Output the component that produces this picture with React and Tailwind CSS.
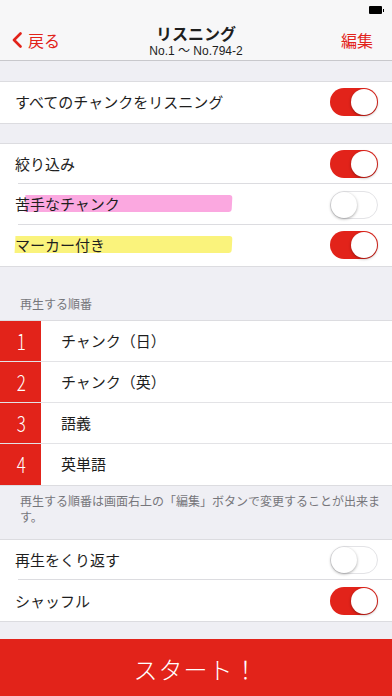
import React from 'react';

const RED = 'bg-[#e2231a]';

function Toggle({ on }) {
  return on ? (
    <div className="w-[48px] h-[28px] rounded-full bg-[#e2231a] relative shrink-0">
      <div className="absolute right-[1px] top-[1px] w-[26px] h-[26px] rounded-full bg-white shadow-[0_1px_3px_rgba(0,0,0,0.35)]" />
    </div>
  ) : (
    <div className="w-[48px] h-[28px] rounded-full bg-white border border-[#e3e3e6] relative shrink-0">
      <div className="absolute left-0 top-0 w-[26px] h-[26px] rounded-full bg-white shadow-[0_1px_3px_rgba(0,0,0,0.35)]" />
    </div>
  );
}

function Row({ label, on, divider, mark }) {
  return (
    <div className="relative h-[40.7px] flex items-center justify-between pl-[15px] pr-[14px]">
      <span className="relative">
        {mark && <span className={`absolute top-[2px] h-[17px] rounded-r-[3px] -skew-x-3 ${mark}`} />}
        <span className="relative">{label}</span>
      </span>
      <Toggle on={on} />
      {divider && <div className="absolute left-[18px] right-0 bottom-0 h-px bg-[#dcdce0]" />}
    </div>
  );
}

const order = ['チャンク（日）', 'チャンク（英）', '語義', '英単語'];

export default function App() {
  return (
    <div
      className="w-[392px] h-[696px] overflow-hidden bg-[#efeff4] text-[15px] text-[#1e1e1e]"
      style={{ fontFamily: '"Noto Sans CJK JP", "Noto Sans", sans-serif' }}
    >
      {/* status + nav */}
      <div className="bg-[#f7f7f8] border-b border-[#c8c8cc]">
        <div className="h-[20px] flex justify-end items-center pr-[8px]">
          <div className="flex items-center">
            <div className="w-[13px] h-[8px] bg-black rounded-[1px]" />
            <div className="w-[1.5px] h-[3px] bg-black ml-[1px]" />
          </div>
        </div>
        <div className="h-[40px] flex items-center justify-between pl-[11px] pr-[19px] relative">
          <div className="flex items-center text-[#e2231a] text-[16px]">
            <svg width="12" height="16" viewBox="0 0 12 16" className="mr-[5px]">
              <path d="M9.5 1.5 L3 8 L9.5 14.5" fill="none" stroke="#e2231a" strokeWidth="2.6" strokeLinecap="round" strokeLinejoin="round" />
            </svg>
            <span>戻る</span>
          </div>
          <div className="absolute left-0 right-0 top-[4px] flex flex-col items-center leading-none pointer-events-none">
            <span className="text-[16px] font-bold leading-[18px]">リスニング</span>
            <span className="text-[12px] leading-[14px] mt-[2px]" style={{ fontFamily: '"Liberation Sans", "Noto Sans CJK JP", sans-serif' }}>
              No.1 〜 No.794-2
            </span>
          </div>
          <span className="text-[#e2231a] text-[16px]">編集</span>
        </div>
      </div>

      <div className="h-[20px]" />
      <div className="bg-white border-y border-[#dcdce0]">
        <Row label="すべてのチャンクをリスニング" on />
      </div>

      <div className="h-[19px]" />
      <div className="bg-white border-y border-[#dcdce0]">
        <Row label="絞り込み" on divider />
        <Row label="苦手なチャンク" divider mark="left-[10px] w-[207px] bg-[#fba8e0]" />
        <Row label="マーカー付き" on mark="left-0 w-[217px] bg-[#faf37c]" />
      </div>

      <div className="h-[53px] flex items-end pl-[20px] pb-[7px] text-[12px] text-[#76767b]">
        再生する順番
      </div>
      <div className="bg-white border-y border-[#dcdce0]">
        {order.map((t, i) => (
          <div key={t} className="h-[41px] flex border-b border-[#e3e3e6] last:border-b-0">
            <div className={`w-[41px] ${RED} text-white text-[20px] font-light flex items-center pl-[16px]`}>
              <span className="inline-block scale-x-[0.85] scale-y-110">{i + 1}</span>
            </div>
            <div className="flex items-center pl-[20px]">{t}</div>
          </div>
        ))}
      </div>
      <div className="h-[53px] pl-[20px] pr-[9px] pt-[7px] text-[12px] leading-[16px] text-[#76767b]">
        再生する順番は画面右上の「編集」ボタンで変更することが出来ます。
      </div>

      <div className="bg-white border-y border-[#dcdce0]">
        <Row label="再生をくり返す" divider />
        <Row label="シャッフル" on />
      </div>

      <div className="h-[17px]" />
      <div className={`h-[60px] ${RED} flex items-center justify-center text-white text-[24px] font-light tracking-[1px]`}>
        スタート！
      </div>
    </div>
  );
}
